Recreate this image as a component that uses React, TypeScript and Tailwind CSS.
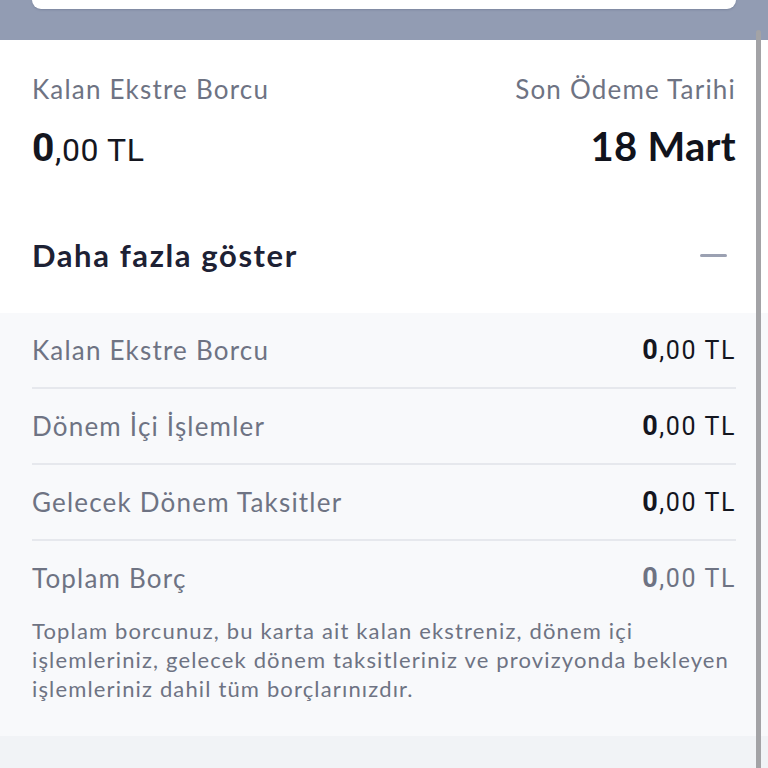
import React from "react";

const rows = ["Kalan Ekstre Borcu", "Dönem İçi İşlemler", "Gelecek Dönem Taksitler"];

function Amount({ muted, size }: { muted?: boolean; size: "lg" | "md" }) {
  return (
    <span
      className={
        (size === "lg" ? "text-[32px] tracking-[0.6px] " : "text-[25px] tracking-[1.6px] ") +
        (muted ? "text-[#6e7383]" : "text-[#14161f]")
      }
      style={{ fontFamily: "Roboto, 'Liberation Sans', sans-serif" }}
    >
      <span className={(size === "lg" ? "text-[39px] " : "text-[27px] ") + "font-bold"}>0</span>,00 TL
    </span>
  );
}

export default function App() {
  return (
    <div
      className="relative w-[768px] h-[768px] overflow-hidden bg-white"
      style={{ fontFamily: "Lato, 'Noto Sans', sans-serif" }}
    >
      <div className="h-[40px] bg-[#929cb3] px-8">
        <div className="h-[9px] bg-white rounded-b-[10px] shadow-[0_1px_2px_rgba(60,70,100,0.25)]" />
      </div>

      <div className="px-8 pt-[33px]">
        <div className="flex justify-between items-start">
          <div className="flex flex-col">
            <div className="h-[32px] flex items-center text-[26px] tracking-[1.2px] text-[#6e7383]">
              Kalan Ekstre Borcu
            </div>
            <div className="mt-[23px] h-[40px] flex items-center">
              <Amount size="lg" />
            </div>
          </div>
          <div className="flex flex-col items-end">
            <div className="h-[32px] flex items-center text-[26px] tracking-[1.2px] text-[#6e7383]">
              Son Ödeme Tarihi
            </div>
            <div className="mt-[21px] h-[40px] flex items-center text-[40px] font-bold text-[#11131c] tracking-[0.3px]">
              18 Mart
            </div>
          </div>
        </div>
        <div className="pt-[60px] pb-[31px]">
          <div className="flex justify-between items-center h-[54px]">
            <span className="text-[31px] font-bold tracking-[1.6px] text-[#1d2134]">Daha fazla göster</span>
            <span className="block w-[27px] h-[3px] rounded-full bg-[#9ba1b2] mr-[9px]" />
          </div>
        </div>
      </div>

      <div className="bg-[#f8f9fb] px-8 pb-[33px]">
        {rows.map((r) => (
          <div
            key={r}
            className="flex justify-between items-center h-[76px] border-b-2 border-[#e6e8ed]"
          >
            <span className="text-[26px] tracking-[1.2px] text-[#6e7383]">{r}</span>
            <Amount size="md" />
          </div>
        ))}
        <div className="flex justify-between items-center h-[75px]">
          <span className="text-[26px] tracking-[1.2px] text-[#6e7383]">Toplam Borç</span>
          <Amount size="md" muted />
        </div>
        <p className="text-[22px] leading-[29px] tracking-[1.15px] text-[#6e7383] whitespace-nowrap">
          Toplam borcunuz, bu karta ait kalan ekstreniz, dönem içi
          <br />
          işlemleriniz, gelecek dönem taksitleriniz ve provizyonda bekleyen
          <br />
          işlemleriniz dahil tüm borçlarınızdır.
        </p>
      </div>
      <div className="h-[60px] bg-[#f1f3f6]" />

      <div className="absolute right-[7px] top-[30px] bottom-0 w-[5px] rounded-t-full bg-[#a3a3a6]" />
    </div>
  );
}
